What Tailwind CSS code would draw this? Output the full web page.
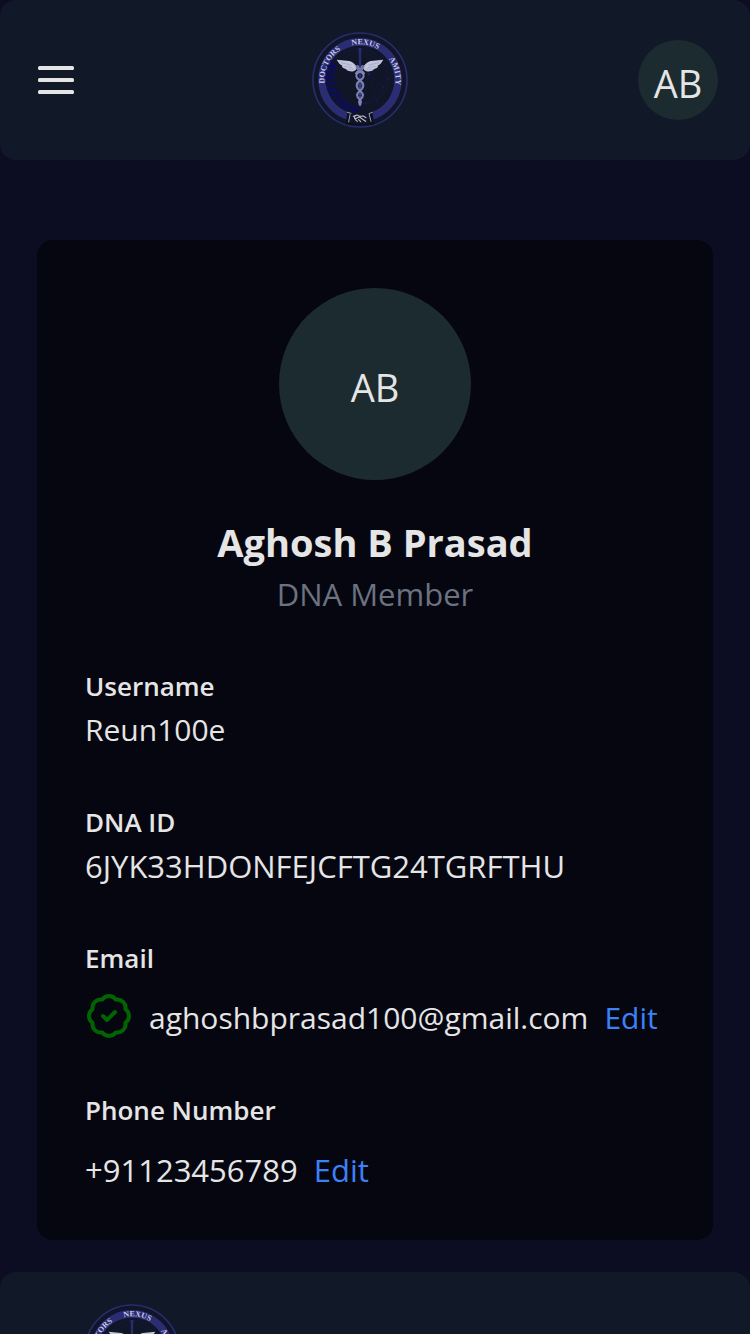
<!DOCTYPE html>
<html lang="en">
<head>
<meta charset="utf-8">
<meta name="viewport" content="width=device-width, initial-scale=1">
<title>Profile</title>
<script src="https://cdn.jsdelivr.net/npm/@tailwindcss/browser@4"></script>
</head>
<body class="bg-[#0c0c22] font-['Open_Sans','Noto_Sans',sans-serif] text-[31px] leading-12 text-[#e5e5e5]">

<svg class="hidden" aria-hidden="true">
  <symbol id="logo" viewBox="36 36 288 288">
    <circle cx="180" cy="180" r="141" fill="#10152a" stroke="#2a2c6c" stroke-width="5"/>
    <!-- ring, open at the handshake -->
    <path d="M144 288A114 114 0 1 1 216 288" fill="none" stroke="#2a2d72" stroke-width="23"/>
    <circle cx="180" cy="180" r="102" fill="#101626"/>
    <path id="seal" d="M180 287A107 107 0 0 1 180 73A107 107 0 0 1 180 287" fill="none"/>
    <g fill="#c9cae6" font-family="'Liberation Serif',serif" font-weight="700" font-size="24">
      <text><textPath href="#seal" startOffset="157">DOCTORS</textPath></text>
      <text><textPath href="#seal" startOffset="311">NEXUS</textPath></text>
      <text><textPath href="#seal" startOffset="436">AMITY</textPath></text>
    </g>
    <!-- network globe -->
    <g fill="none" stroke="#171a48" stroke-width="1.5">
      <path d="M128 105Q180 65 232 105Q268 140 266 185Q256 235 205 252M200 110L266 180M206 162L250 202L262 176M206 162L230 244L250 202M206 162L190 245M206 162L245 125M200 246L250 202M120 120L180 90L240 120"/>
    </g>
    <g fill="#191a68"><circle cx="206" cy="162" r="4"/><circle cx="250" cy="202" r="2.5"/><circle cx="262" cy="176" r="2.5"/><circle cx="230" cy="244" r="2.5"/><circle cx="196" cy="250" r="3"/></g>
    <!-- laurel -->
    <path d="M100 130Q78 175 98 215Q120 255 172 272" fill="none" stroke="#0c0c5c" stroke-width="4"/>
    <g fill="#0c0c62" stroke="#0c0c62" stroke-width="1.5">
      <path d="M100 134q-10-4-8-14q11 4 8 14M94 148q-12-2-12-13q12 1 12 13M90 163q-12 0-14-11q13-1 14 11M89 179q-12 2-15-9q12-3 15 9M91 195q-11 4-16-6q11-5 16 6M97 211q-10 6-17-3q10-7 17 3M107 226q-8 8-17 0q8-8 17 0M119 240q-6 9-16 4q5-10 16-4M134 252q-4 10-15 7q3-11 15-7M150 262q-2 11-14 9q2-11 14-9M165 269q0 11-12 10q0-11 12-10"/>
      <path d="M96 146q0-12 13-14q1 12-13 14M92 162q2-11 14-12q-1 12-14 12M91 178q3-10 15-10q-2 11-15 10M93 194q5-10 16-7q-4 10-16 7M99 210q6-9 16-4q-5 9-16 4M109 225q8-8 17-1q-8 8-17 1M122 239q9-7 17 1q-9 7-17-1M138 251q9-6 16 2q-9 6-16-2M155 260q10-5 16 4q-10 5-16-4M170 268q7-7 12 1q-5 6-12-1"/>
    </g>
    <!-- staff -->
    <path d="M180 86V258" stroke="#292d70" stroke-width="7"/>
    <circle cx="180" cy="88" r="5" fill="#292d70"/>
    <!-- serpents -->
    <g fill="none" stroke="#8184b4" stroke-width="6" stroke-linecap="round">
      <path d="M168 160Q174 151 184 156Q200 170 180 181Q160 196 180 212Q198 226 180 239Q174 247 181 254"/>
      <path d="M192 160Q186 151 176 156Q160 170 180 181Q200 196 180 212Q162 226 180 239Q186 247 179 254"/>
    </g>
    <path d="M172 192h16M170 198h20M173 204h14M172 222h16M172 229h16" stroke="#5c60a0" stroke-width="2"/>
    <!-- wings -->
    <g fill="#c4c6dd">
      <path d="M172 142Q160 126 148 123L110 119Q117 133 128 138L125 140Q132 147 140 147L138 149Q148 156 161 154Q169 151 172 142Z"/>
      <path d="M188 142Q200 126 212 123L250 119Q243 133 232 138L235 140Q228 147 220 147L222 149Q212 156 199 154Q191 151 188 142Z"/>
    </g>
    <path d="M166 138L174 134L180 144L186 134L194 138L188 152H172Z" fill="#6f73a4"/>
    <path d="M122 128L154 135M131 139L156 142M144 148L163 147M238 128L206 135M229 139L204 142M216 148L197 147" fill="none" stroke="#8d90b6" stroke-width="1.5"/>
    <!-- handshake -->
    <path d="M142 276L153 279L146 306L162 312H200L214 306L207 281L217 276L223 314H137Z" fill="#0c101c"/>
    <g fill="none" stroke="#b8b9c2" stroke-linecap="round" stroke-linejoin="round">
      <path d="M142 277L153 280M150 284L146 306M217 277L207 281L213 304" stroke-width="2.5"/>
      <path d="M160 289L171 285L179 289L190 288L198 293M165 290Q160 298 169 295L178 291L197 304M166 299L172 304M176 299L182 305" stroke-width="3.5"/>
    </g>
  </symbol>
</svg>

<header class="flex h-40 items-center justify-between rounded-2xl bg-[#111827] px-8">
  <button type="button" aria-label="Open menu" class="flex size-12 items-center justify-center">
    <svg class="h-7 w-9" viewBox="0 0 36 28" fill="#e5e5e5" aria-hidden="true">
      <rect width="36" height="4" rx="1.5"/><rect y="12" width="36" height="4" rx="1.5"/><rect y="24" width="36" height="4" rx="1.5"/>
    </svg>
  </button>
  <a href="#" aria-label="Doctors Nexus Amity home" class="ml-0.5"><svg class="size-24"><use href="#logo"/></svg></a>
  <button type="button" aria-label="Account" class="flex size-20 items-center justify-center rounded-full bg-[#1c2b30] pt-1.5 text-[38px]">AB</button>
</header>

<main class="px-[37px] pt-20 pb-8">
  <section class="rounded-2xl bg-[#060611] px-12 pt-12 pb-[46px]">
    <div class="flex flex-col items-center">
      <div class="flex size-48 items-center justify-center rounded-full bg-[#1c2b30] pt-1.5 text-[38px]">AB</div>
      <h1 class="mt-[34px] text-[38px] leading-14 font-bold">Aghosh B Prasad</h1>
      <p class="text-[#6b7280]">DNA Member</p>
    </div>
    <dl class="mt-12 flex flex-col gap-12">
      <div>
        <dt class="text-[26px] leading-10 font-semibold">Username</dt>
        <dd class="text-[30px]">Reun100e</dd>
      </div>
      <div>
        <dt class="text-[26px] leading-10 font-semibold">DNA ID</dt>
        <dd>6JYK33HDONFEJCFTG24TGRFTHU</dd>
      </div>
      <div>
        <dt class="text-[26px] leading-10 font-semibold">Email</dt>
        <dd class="mt-3.5 mb-0.5 flex h-12 items-center gap-4 text-[30px]">
          <svg class="size-12 shrink-0" viewBox="0 0 24 24" fill="none" stroke="#006400" stroke-width="2" stroke-linecap="round" stroke-linejoin="round" role="img" aria-label="Verified">
            <path transform="translate(12 12) scale(1.11) translate(-12 -12)" stroke-width="1.8" d="M21 12c0 1.268-.63 2.39-1.593 3.068a3.745 3.745 0 0 1-1.043 3.296 3.745 3.745 0 0 1-3.296 1.043A3.745 3.745 0 0 1 12 21c-1.268 0-2.39-.63-3.068-1.593a3.746 3.746 0 0 1-3.296-1.043 3.745 3.745 0 0 1-1.043-3.296A3.745 3.745 0 0 1 3 12c0-1.268.63-2.39 1.593-3.068a3.745 3.745 0 0 1 1.043-3.296 3.746 3.746 0 0 1 3.296-1.043A3.746 3.746 0 0 1 12 3c1.268 0 2.39.63 3.068 1.593a3.746 3.746 0 0 1 3.296 1.043 3.746 3.746 0 0 1 1.043 3.296A3.745 3.745 0 0 1 21 12Z"/>
            <path d="M9 12l2 2 4-4"/>
          </svg>
          <span class="pt-1">aghoshbprasad100@gmail.com</span>
          <a href="#" class="pt-1 text-[#3b82f6]">Edit</a>
        </dd>
      </div>
      <div>
        <dt class="text-[26px] leading-10 font-semibold">Phone Number</dt>
        <dd class="mt-4 flex items-center gap-4">
          <span>+91123456789</span>
          <a href="#" class="text-[#3b82f6]">Edit</a>
        </dd>
      </div>
    </dl>
  </section>
</main>

<footer class="rounded-t-2xl bg-[#111827] px-[84px] py-8">
  <a href="#" aria-label="Doctors Nexus Amity home" class="block size-24"><svg class="size-24"><use href="#logo"/></svg></a>
</footer>
</body>
</html>
